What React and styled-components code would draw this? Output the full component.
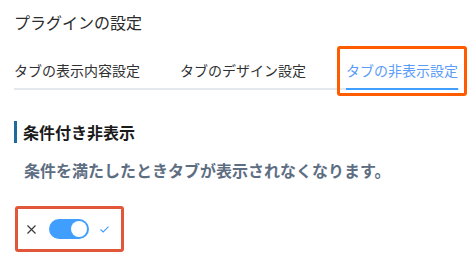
import React from "react";
import styled, { createGlobalStyle } from "styled-components";

const Global = createGlobalStyle`
  html, body { margin: 0; padding: 0; background: #fff; }
  body { font-family: "Noto Sans CJK JP", "Noto Sans", sans-serif; }
`;

const Page = styled.div`
  padding: 11px 14px 0 14px;
  width: 473px;
  box-sizing: border-box;
`;

const Title = styled.div`
  font-size: 16px;
  line-height: 22px;
  color: #2b2b2b;
`;

const TabBar = styled.div`
  margin-top: 17px;
  display: flex;
  border-bottom: 2px solid #e4e7ed;
`;

const Tab = styled.div`
  position: relative;
  font-size: 14px;
  line-height: 36px;
  padding: 2px 20px 0;
  margin-bottom: -2px;
  color: ${(p) => (p.$active ? "#5a9cf8" : "#303133")};
  border-bottom: 2px solid ${(p) => (p.$active ? "#409eff" : "transparent")};
  &:first-child { padding-left: 0; }
  ${(p) => p.$active && `margin-left: 0; padding-left: 0; padding-right: 0; margin-left: 20px;`}
`;

const Highlight = styled.div`
  position: absolute;
  left: -9px;
  right: -9px;
  top: -4px;
  bottom: -8px;
  border: 3px solid #ff5c00;
  border-radius: 3px;
  pointer-events: none;
`;

const Heading = styled.div`
  margin-top: 31px;
  font-size: 16px;
  font-weight: 700;
  line-height: 22px;
  color: #1a1a1a;
  border-left: 3px solid #1f6a99;
  padding-left: 6px;
`;

const Description = styled.div`
  margin-top: 15px;
  padding-left: 10px;
  font-size: 16px;
  font-weight: 700;
  line-height: 24px;
  color: #5e6e82;
`;

const SwitchBox = styled.div`
  margin: 24px 0 0 1px;
  display: inline-flex;
  align-items: center;
  height: 40px;
  padding: 0 12px 0 9px;
  border: 3px solid #e2563a;
  border-radius: 3px;
`;

const Icon = styled.svg`
  display: block;
  flex: none;
`;

const Track = styled.div`
  margin: 0 11px 0 13px;
  width: 40px;
  height: 20px;
  border-radius: 10px;
  background: #409eff;
  display: flex;
  align-items: center;
  justify-content: ${(p) => (p.$on ? "flex-end" : "flex-start")};
  padding: 0 2px;
  box-sizing: border-box;
`;

const Knob = styled.div`
  width: 16px;
  height: 16px;
  border-radius: 50%;
  background: #fff;
`;

export default function App() {
  const tabs = ["タブの表示内容設定", "タブのデザイン設定", "タブの非表示設定"];
  return (
    <Page>
      <Global />
      <Title>プラグインの設定</Title>
      <TabBar>
        {tabs.map((t, i) => (
          <Tab key={t} $active={i === 2}>
            {t}
            {i === 2 && <Highlight />}
          </Tab>
        ))}
      </TabBar>
      <Heading>条件付き非表示</Heading>
      <Description>条件を満たしたときタブが表示されなくなります。</Description>
      <SwitchBox>
        <Icon width="9" height="9" viewBox="0 0 9 9">
          <path d="M0.5 0.5 L8.5 8.5 M8.5 0.5 L0.5 8.5" stroke="#3a3a3a" strokeWidth="1.2" fill="none" />
        </Icon>
        <Track $on>
          <Knob />
        </Track>
        <Icon width="9" height="7" viewBox="0 0 9 7">
          <path d="M0.5 3.5 L3.2 6 L8.5 0.6" stroke="#409eff" strokeWidth="1.1" fill="none" />
        </Icon>
      </SwitchBox>
    </Page>
  );
}
